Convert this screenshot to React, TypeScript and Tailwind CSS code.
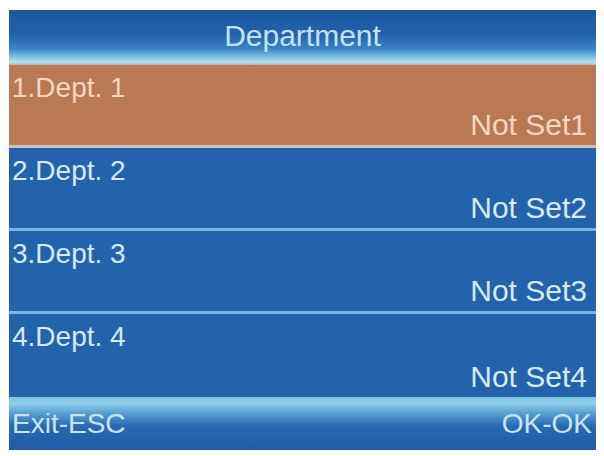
import React from "react";

type Dept = { label: string; value: string; active?: boolean };

const depts: Dept[] = [
  { label: "1.Dept. 1", value: "Not Set1", active: true },
  { label: "2.Dept. 2", value: "Not Set2" },
  { label: "3.Dept. 3", value: "Not Set3" },
  { label: "4.Dept. 4", value: "Not Set4" },
];

function Row({ d, last }: { d: Dept; last: boolean }) {
  const bg = d.active
    ? "bg-[#b97953] text-[#f6d8c2]"
    : "bg-[#2462ab] text-[#d6ebfa]";
  const sep = last
    ? ""
    : d.active
    ? "border-b-[3px] border-[#c9c3bf]"
    : "border-b-[3px] border-[#78b6e6]";
  return (
    <div className={`flex flex-col justify-between h-[83px] ${bg} ${sep} ${last ? "h-[82px]" : ""}`}>
      <div className="pl-[3px] pt-[7px] text-[28px] leading-[32px]">{d.label}</div>
      <div className="self-end pr-[9px] pb-[3px] text-[30px] leading-[34px]">{d.value}</div>
    </div>
  );
}

export default function App() {
  return (
    <div className="w-[604px] h-[456px] bg-white pl-[9px] pt-[10px]" style={{ fontFamily: '"Liberation Sans", Arial, sans-serif' }}>
      <div className="w-[587px] h-[440px] flex flex-col overflow-hidden">
        <div className="h-[55px] flex items-center justify-center bg-[linear-gradient(to_bottom,#1c56a2_0%,#2462ad_45%,#3b82c4_70%,#8acbe6_88%,#b9e0ef_95%,#b8b6b2_100%)]">
          <span className="text-[30px] leading-[34px] text-[#c4e2f6] pb-[3px]">Department</span>
        </div>
        {depts.map((d, i) => (
          <Row key={d.label} d={d} last={i === depts.length - 1} />
        ))}
        <div className="flex-1 flex items-center justify-between px-[3px] bg-[linear-gradient(to_bottom,#7cc2e4_0%,#93d0ea_12%,#5aa0d4_30%,#2a68b2_55%,#2159a5_100%)]">
          <span className="text-[28px] leading-[32px] text-[#c9e5f6]">Exit-ESC</span>
          <span className="text-[28px] leading-[32px] text-[#c9e5f6] pr-[1px]">OK-OK</span>
        </div>
      </div>
    </div>
  );
}
